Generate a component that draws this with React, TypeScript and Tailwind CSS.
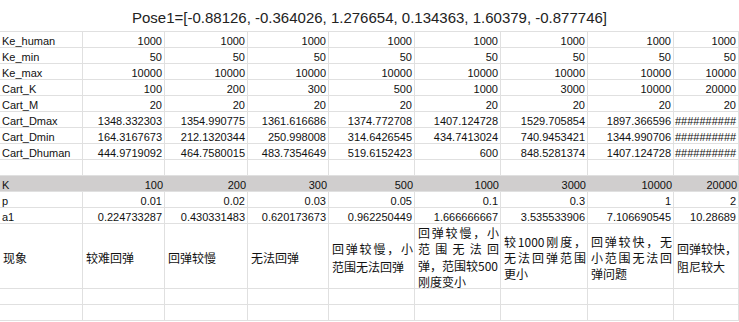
const line = "border-[#e0e0e0]";

const rows: { label: string; values: string[]; gray?: boolean }[] = [
  { label: "Ke_human", values: Array(8).fill("1000") },
  { label: "Ke_min", values: Array(8).fill("50") },
  { label: "Ke_max", values: Array(8).fill("10000") },
  { label: "Cart_K", values: ["100", "200", "300", "500", "1000", "3000", "10000", "20000"] },
  { label: "Cart_M", values: Array(8).fill("20") },
  {
    label: "Cart_Dmax",
    values: ["1348.332303", "1354.990775", "1361.616686", "1374.772708", "1407.124728", "1529.705854", "1897.366596", "#"],
  },
  {
    label: "Cart_Dmin",
    values: ["164.3167673", "212.1320344", "250.998008", "314.6426545", "434.7413024", "740.9453421", "1344.990706", "#"],
  },
  {
    label: "Cart_Dhuman",
    values: ["444.9719092", "464.7580015", "483.7354649", "519.6152423", "600", "848.5281374", "1407.124728", "#"],
  },
  { label: "", values: Array(8).fill("") },
  { label: "K", values: ["100", "200", "300", "500", "1000", "3000", "10000", "20000"], gray: true },
  { label: "p", values: ["0.01", "0.02", "0.03", "0.05", "0.1", "0.3", "1", "2"] },
  {
    label: "a1",
    values: ["0.224733287", "0.430331483", "0.620173673", "0.962250449", "1.666666667", "3.535533906", "7.106690545", "10.28689"],
  },
];

// each note: lines, and whether the line is spread to the cell width
const notes: { lines: [string, boolean][]; lh: string }[] = [
  { lines: [["较难回弹", false]], lh: "leading-[16px]" },
  { lines: [["回弹较慢", false]], lh: "leading-[16px]" },
  { lines: [["无法回弹", false]], lh: "leading-[16px]" },
  { lines: [["回弹较慢，小", true], ["范围无法回弹", false]], lh: "leading-[18px]" },
  {
    lines: [["回弹较慢，小", true], ["范围无法回", true], ["弹，范围较500", false], ["刚度变小", false]],
    lh: "leading-[16.3px]",
  },
  { lines: [["较1000刚度，", true], ["无法回弹范围", true], ["更小", false]], lh: "leading-[16px]" },
  { lines: [["回弹较快，无", true], ["小范围无法回", true], ["弹问题", false]], lh: "leading-[16px]" },
  { lines: [["回弹较快，", false], ["阻尼较大", false]], lh: "leading-[18px]" },
];

function Cell({ children, right, gray }: { children?: React.ReactNode; right?: boolean; gray?: boolean }) {
  return (
    <div
      className={`h-4 overflow-hidden whitespace-nowrap pt-[3px] text-[11px] leading-[12px] ${
        gray ? "bg-[#d0cece] border-b border-[#e0e0e0]" : `border-r border-b ${line}`
      } ${right ? "pr-[2px] text-right" : "pl-[2px]"}`}
    >
      {children}
    </div>
  );
}

export default function App() {
  return (
    <div className="h-[322px] w-[739px] overflow-hidden bg-white text-[#111] font-['Liberation_Sans',Arial,sans-serif]">
      <div className={`h-8 border-b ${line} pt-[8px] text-center text-[15px] leading-[20px] text-[#222]`}>
        Pose1=[-0.88126, -0.364026, 1.276654, 0.134363, 1.60379, -0.877746]
      </div>
      <div className="grid grid-cols-[83px_82px_83px_81px_86px_86px_87px_86px_65px]">
        {rows.map((r, i) => (
          <Row key={i} label={r.label} values={r.values} gray={r.gray} />
        ))}

        <div className={`flex h-[65px] items-center border-r border-b ${line} pl-[3px] pt-[4px] font-['Noto_Sans_CJK_SC',sans-serif] text-[12px]`}>
          现象
        </div>
        {notes.map((n, i) => (
          <div
            key={i}
            className={`flex h-[65px] flex-col justify-center border-r border-b ${line} pl-[3px] pr-[1px] pt-[3px] font-['Noto_Sans_CJK_SC',sans-serif] text-[12px] ${n.lh}`}
          >
            {n.lines.map(([t, spread], j) => (
              <div key={j} className={`whitespace-nowrap ${spread ? "text-justify [text-align-last:justify]" : ""}`}>
                {t}
              </div>
            ))}
          </div>
        ))}

        {[0, 1].map((k) =>
          Array.from({ length: 9 }).map((_, c) => <Cell key={`e${k}-${c}`} />)
        )}
      </div>
    </div>
  );
}

function Row({ label, values, gray }: { label: string; values: string[]; gray?: boolean }) {
  return (
    <>
      <Cell gray={gray}>{label}</Cell>
      {values.map((v, i) =>
        v === "#" ? (
          <div key={i} className={`h-4 overflow-hidden whitespace-nowrap border-r border-b ${line} pl-[1px] pt-[3px] text-[11px] leading-[12px]`}>
            ##########
          </div>
        ) : (
          <Cell key={i} right gray={gray}>
            {v}
          </Cell>
        )
      )}
    </>
  );
}
